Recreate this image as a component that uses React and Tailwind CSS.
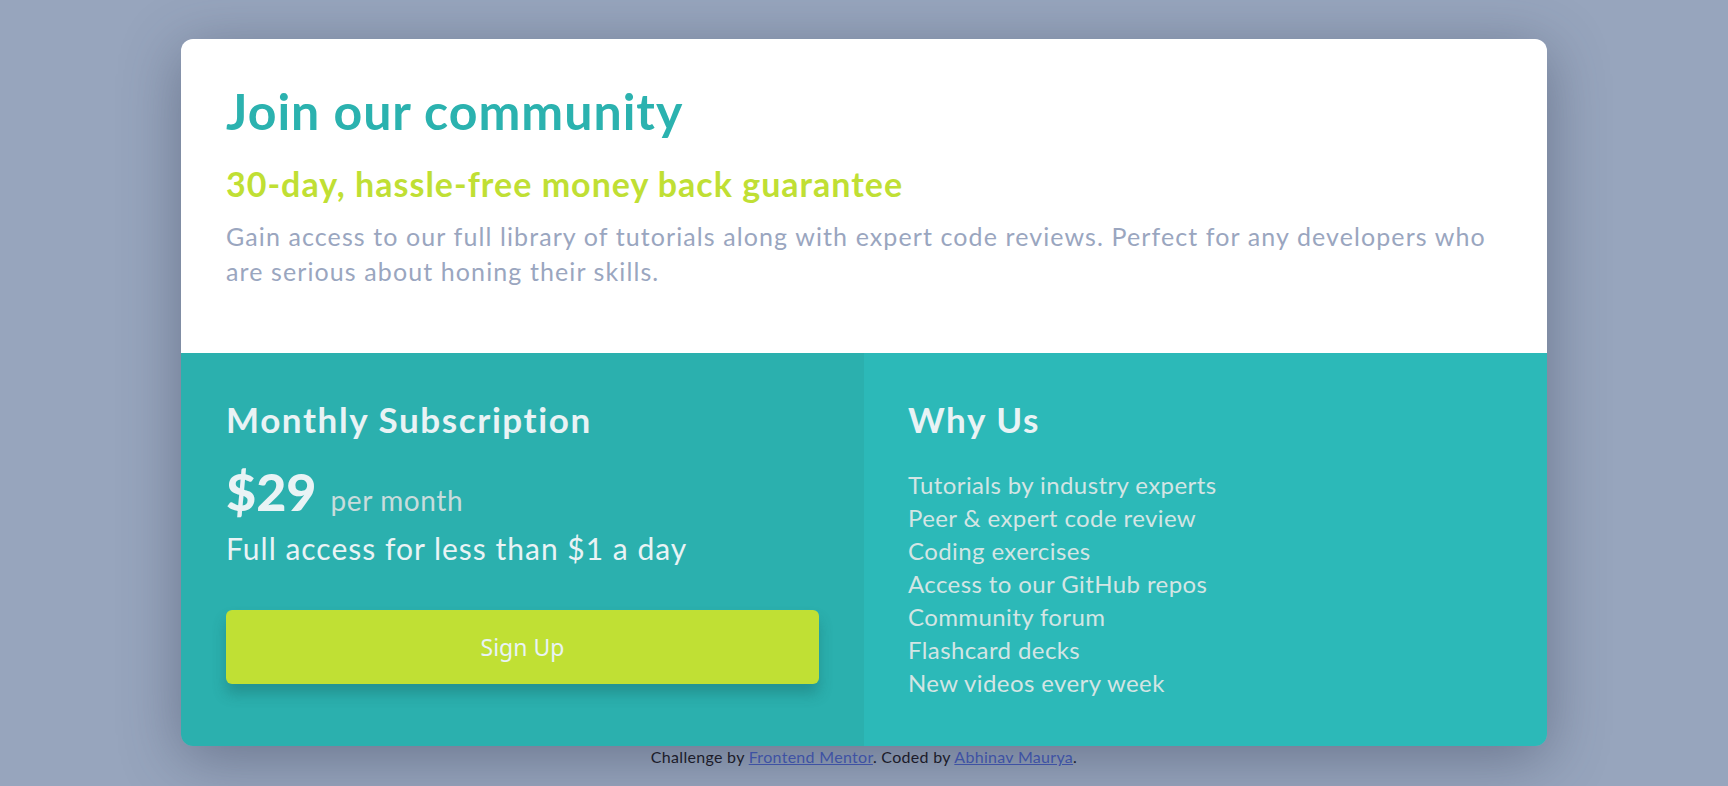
import React from 'react';

const perks = [
  'Tutorials by industry experts',
  'Peer & expert code review',
  'Coding exercises',
  'Access to our GitHub repos',
  'Community forum',
  'Flashcard decks',
  'New videos every week',
];

const App = () => {
  return (
    <div className="min-h-screen bg-[#97a5bd] flex flex-col items-center pt-[39px] font-['Lato',sans-serif]">
      {/* Card */}
      <main className="w-[1366px] rounded-xl overflow-hidden shadow-[0_12px_60px_rgba(50,60,85,0.45)]">
        {/* Top */}
        <section className="bg-white px-[45px] pt-[44px] pb-[64px]">
          <h1 className="text-[50px] leading-[56px] font-bold text-[#2bb2af] tracking-[1px]">Join our community</h1>
          <h2 className="mt-[25px] text-[34px] leading-[40px] font-bold text-[#c0df34] tracking-[1px]">
            30-day, hassle-free money back guarantee
          </h2>
          <p className="mt-[15px] text-[25px] leading-[35px] text-[#9aa6bf] tracking-[1.1px]">
            Gain access to our full library of tutorials along with expert code reviews. Perfect for any developers who are serious about honing their skills.
          </p>
        </section>

        {/* Bottom */}
        <div className="grid grid-cols-2">
          <section className="bg-[#2bb0ae] px-[45px] pt-[46px] pb-[62px]">
            <h3 className="text-[35px] leading-[40px] font-bold text-[#e9f3f5] tracking-[1.6px]">Monthly Subscription</h3>
            <div className="mt-[24px] flex items-baseline gap-[14px] h-[56px]">
              <span className="text-[52px] leading-[56px] font-black text-[#e9f3f5]">$29</span>
              <span className="text-[28px] text-[#c8dcdc] tracking-[0.6px]">per month</span>
            </div>
            <p className="mt-[11px] text-[30px] leading-[36px] text-[#e9f3f5] tracking-[1px]">Full access for less than $1 a day</p>
            <button className="mt-[44px] w-full h-[74px] rounded-md bg-[#c0e034] text-[#e9f3f5] text-[23px] font-['Noto_Sans',sans-serif] shadow-[0_10px_14px_rgba(20,80,80,0.3)]">
              Sign Up
            </button>
          </section>

          <section className="bg-[#2cb9b8] pl-[44px] pr-[45px] pt-[46px]">
            <h3 className="text-[35px] leading-[40px] font-bold text-[#e9f3f5] tracking-[1.6px]">Why Us</h3>
            <ul className="mt-[29px]">
              {perks.map((p) => (
                <li key={p} className="text-[24px] leading-[33px] text-[#d3e5e4] tracking-[0.4px]">{p}</li>
              ))}
            </ul>
          </section>
        </div>
      </main>

      <footer className="text-[16px] leading-[22px] text-[#1b1b2a] tracking-[0.3px]">
        Challenge by <a href="#" className="text-[#3e52a3] underline">Frontend Mentor</a>. Coded by{' '}
        <a href="#" className="text-[#3e52a3] underline">Abhinav Maurya</a>.
      </footer>
    </div>
  );
};

export default App;
